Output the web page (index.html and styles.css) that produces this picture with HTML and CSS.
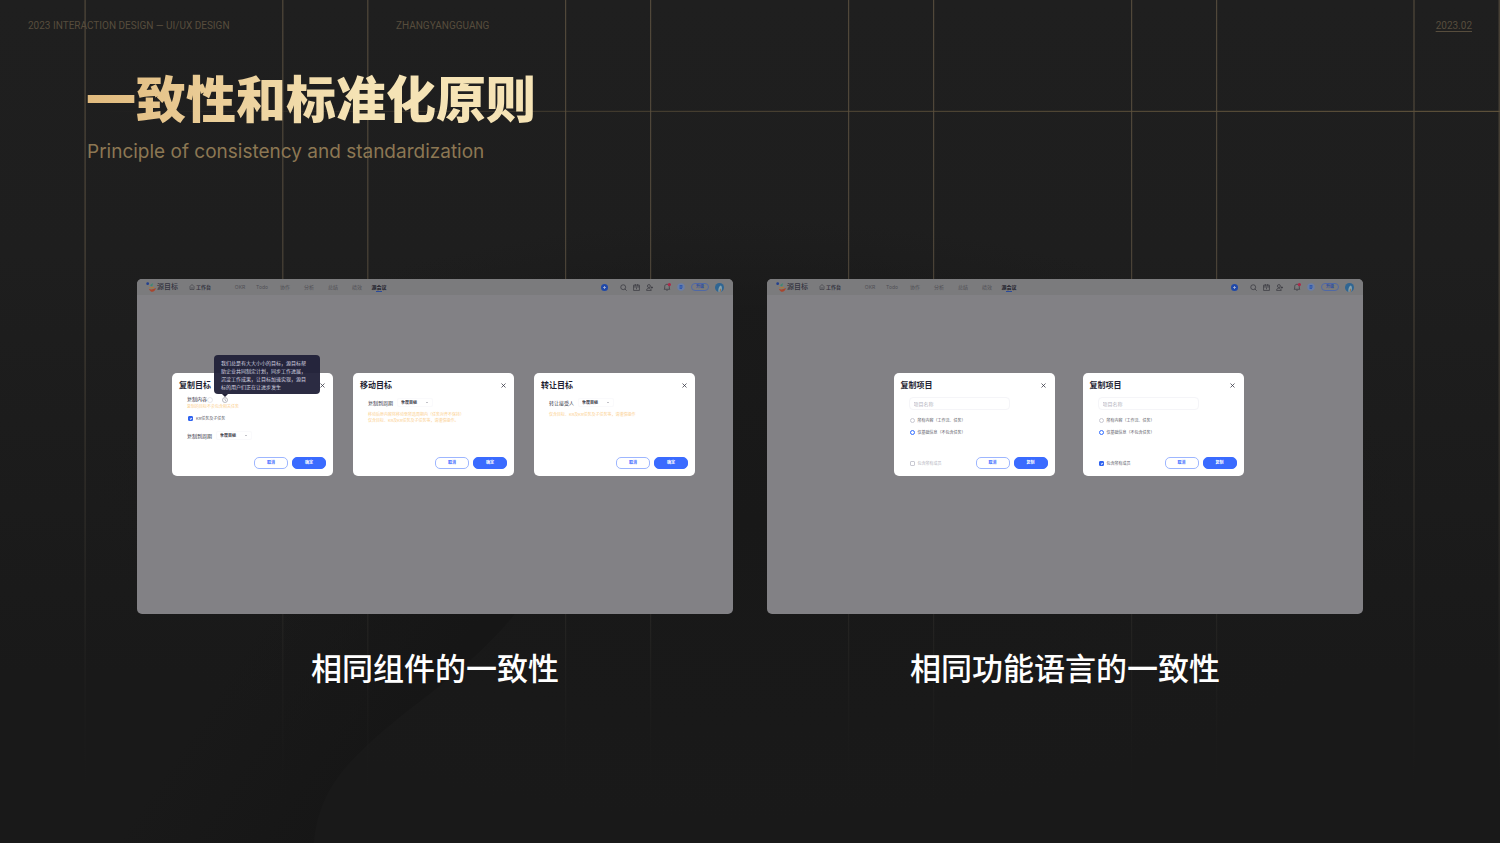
FILE: index.html
```html
<!DOCTYPE html>
<html lang="zh-CN">
<head>
    <meta charset="UTF-8">
    <meta name="viewport" content="width=device-width, initial-scale=1.0">
    <title>一致性和标准化原则</title>
    <link rel="stylesheet" href="styles.css">
</head>
<body>
    <!-- background shapes and grid lines -->
    <svg class="backdrop" viewBox="0 0 1500 843" preserveAspectRatio="none" aria-hidden="true">
        <defs>
            <linearGradient id="fadeDown" gradientUnits="userSpaceOnUse" x1="0" y1="0" x2="0" y2="810">
                <stop offset="0" stop-color="#51483a"/>
                <stop offset="0.3" stop-color="#4c4438"/>
                <stop offset="0.75" stop-color="#262523"/>
                <stop offset="1" stop-color="#1a1a1a" stop-opacity="0"/>
            </linearGradient>
            <linearGradient id="fadeLeft" gradientUnits="userSpaceOnUse" x1="100" y1="0" x2="1500" y2="0">
                <stop offset="0" stop-color="#5c503a" stop-opacity="0"/>
                <stop offset="0.4" stop-color="#5c503a" stop-opacity="0.6"/>
                <stop offset="1" stop-color="#5c503a"/>
            </linearGradient>
            <linearGradient id="curve" gradientUnits="userSpaceOnUse" x1="250" y1="640" x2="400" y2="740">
                <stop offset="0" stop-color="#161616" stop-opacity="0"/>
                <stop offset="1" stop-color="#161616"/>
            </linearGradient>
            <radialGradient id="shade" gradientUnits="userSpaceOnUse" cx="750" cy="520" r="300" gradientTransform="translate(750 0) scale(2.2 1) translate(-750 0)">
                <stop offset="0" stop-color="#181818"/>
                <stop offset="0.7" stop-color="#191919" stop-opacity="0.8"/>
                <stop offset="1" stop-color="#1a1a1a" stop-opacity="0"/>
            </radialGradient>
        </defs>
        <rect width="1500" height="843" fill="url(#shade)"/>
        <path d="M515 614C470 668 425 695 382 732C350 760 318 790 314 843H100V560H550Z" fill="url(#curve)"/>
        <g fill="url(#fadeDown)">
            <rect x="84.5" width="1.2" height="810"/>
            <rect x="282.2" width="1.2" height="810"/>
            <rect x="367.2" width="1.2" height="810"/>
            <rect x="565" width="1.2" height="810"/>
            <rect x="650" width="1.2" height="810"/>
            <rect x="848" width="1.2" height="810"/>
            <rect x="933" width="1.2" height="810"/>
            <rect x="1131" width="1.2" height="810"/>
            <rect x="1216" width="1.2" height="810"/>
            <rect x="1413.4" width="1.2" height="810"/>
            <rect x="1498.6" width="1.2" height="810"/>
        </g>
        <rect x="100" y="110.8" width="1400" height="1.2" fill="url(#fadeLeft)"/>
    </svg>

    <!-- shared icons -->
    <svg class="sprite" aria-hidden="true">
        <symbol id="logo" viewBox="0 0 18 18">
            <circle cx="3" cy="3" r="2.5" fill="#23408f"/>
            <path d="M7 6l6-4-2 6z" fill="#3d8a74"/>
            <path d="M3 6c1 5 5 5 12 2-1 5-10 6-12-2z" fill="#b47a30"/>
            <path d="M5 12c3 2 7 2 13-1-2 8-10 9-13 1z" fill="#a8462f"/>
        </symbol>
        <symbol id="home" viewBox="0 0 12 12"><path d="M2 5l4-4 4 4v6H2zM4 8h4" fill="none" stroke="#2c2c36"/></symbol>
        <symbol id="plus" viewBox="0 0 14 14"><circle cx="7" cy="7" r="7" fill="#1f48a8"/><path d="M7 4v6M4 7h6" stroke="#a9b4d0" stroke-width="1.6"/></symbol>
        <symbol id="search" viewBox="0 0 12 12"><circle cx="5.5" cy="5.5" r="4.2" fill="none" stroke="#35353c" stroke-width="1.2"/><path d="M8.5 8.5l3 3" stroke="#35353c" stroke-width="1.2"/></symbol>
        <symbol id="calendar" viewBox="0 0 12 12"><path d="M1 2h10v9H1zM1 5h10M4 0v3M8 0v3M6 6v3" fill="none" stroke="#35353c" stroke-width="1.2"/></symbol>
        <symbol id="user" viewBox="0 0 12 12"><circle cx="5" cy="3.5" r="2.5" fill="none" stroke="#35353c" stroke-width="1.2"/><path d="M1 11c0-5 7-5 8 0zM8 6h4M10 4v4" fill="none" stroke="#35353c" stroke-width="1.2"/></symbol>
        <symbol id="bell" viewBox="0 0 14 14"><path d="M2 11h10l-1-2V6c0-5-8-5-8 0v3zM6 13h2" fill="none" stroke="#35353c" stroke-width="1.2"/><circle cx="11.2" cy="2.8" r="2.8" fill="#b02848"/></symbol>
        <symbol id="app" viewBox="0 0 16 16"><circle cx="8" cy="8" r="7.5" fill="#6b7ea6"/><path d="M5 5h6M4 8h8M5 11h5M8 4v8" stroke="#2450b0" stroke-width="1.4"/></symbol>
        <symbol id="avatar" viewBox="0 0 18 18"><circle cx="9" cy="9" r="9" fill="#2f6592"/><path d="M7 18c-1-6 1-12 5-13 3 3 2 9 0 12z" fill="#85a2ae"/><path d="M9 17c0-4 1-6 3-6v6z" fill="#96704f"/></symbol>
        <symbol id="close" viewBox="0 0 10 10"><path d="M1 1l8 8M9 1L1 9" stroke="#33333f" stroke-width="1.5"/></symbol>
        <symbol id="info" viewBox="0 0 12 12"><circle cx="6" cy="6" r="5" fill="none" stroke="#777783"/><path d="M6 3v3l2 2" fill="none" stroke="#777783"/></symbol>
        <symbol id="ring" viewBox="0 0 12 12"><circle cx="6" cy="6" r="5" fill="none" stroke="#d0d0d8"/></symbol>
        <symbol id="arrow" viewBox="0 0 6 6"><path d="M2 2l1 1 1-1" fill="none" stroke="#777783"/></symbol>
    </svg>

    <header class="top">
        <span class="top-left">2023 INTERACTION DESIGN — UI/UX DESIGN</span>
        <span class="top-name">ZHANGYANGGUANG</span>
        <span class="top-date">2023.02</span>
    </header>

    <main>
        <h1>一致性和标准化原则</h1>
        <p class="subtitle">Principle of consistency and standardization</p>

        <div class="boards">
            <figure>
                <div class="board">
                    <nav class="bar">
                        <div class="brand"><svg><use href="#logo"/></svg>源目标</div>
                        <a class="desk" href="#"><svg><use href="#home"/></svg>工作台</a>
                        <div class="menu">
                            <a href="#">OKR</a><a href="#">Todo</a><a href="#">协作</a><a href="#">分析</a><a href="#">总结</a><a href="#">绩效</a><a href="#" class="active">源会议</a>
                        </div>
                        <div class="tools">
                            <svg class="add"><use href="#plus"/></svg>
                            <svg><use href="#search"/></svg>
                            <svg><use href="#calendar"/></svg>
                            <svg><use href="#user"/></svg>
                            <svg class="bell"><use href="#bell"/></svg>
                            <svg class="app"><use href="#app"/></svg>
                            <button class="upgrade" type="button">升级</button>
                            <svg class="avatar"><use href="#avatar"/></svg>
                        </div>
                    </nav>
                    <div class="modals">
                        <section class="modal">
                            <div class="modal-head">
                                <h2>复制目标</h2>
                                <button class="close" type="button" aria-label="关闭"><svg><use href="#close"/></svg></button>
                            </div>
                            <div class="modal-body">
                                <div class="label-row">
                                    <span>复制内容</span>
                                    <svg><use href="#ring"/></svg>
                                    <span class="hint">
                                        <svg><use href="#info"/></svg>
                                        <span class="tooltip">我们总是有大大小小的目标，源目标帮<br>助企业共同制定计划，同步工作进展，<br>沉淀工作成果，让目标加速实现，源目<br>标的用户们正在让进步发生</span>
                                    </span>
                                </div>
                                <p class="warn warn-near">复制的目标不会包含相关任务</p>
                                <label class="option option-kr"><input type="checkbox" checked>KR任务及子任务</label>
                                <div class="field field-low">
                                    <label for="period1">复制到周期</label>
                                    <span class="select"><select id="period1"><option>季度目标</option></select><svg><use href="#arrow"/></svg></span>
                                </div>
                            </div>
                            <div class="modal-foot">
                                <button class="btn" type="button">取消</button>
                                <button class="btn primary" type="button">确定</button>
                            </div>
                        </section>

                        <section class="modal">
                            <div class="modal-head">
                                <h2>移动目标</h2>
                                <button class="close" type="button" aria-label="关闭"><svg><use href="#close"/></svg></button>
                            </div>
                            <div class="modal-body">
                                <div class="field">
                                    <label for="period2">复制到周期</label>
                                    <span class="select"><select id="period2"><option>季度目标</option></select><svg><use href="#arrow"/></svg></span>
                                </div>
                                <p class="warn">移动后原内容将移动至所选周期内（任务对齐不保持）<br>仅含目标、KR及KR任务及子任务等，请谨慎操作。</p>
                            </div>
                            <div class="modal-foot">
                                <button class="btn" type="button">取消</button>
                                <button class="btn primary" type="button">确定</button>
                            </div>
                        </section>

                        <section class="modal">
                            <div class="modal-head">
                                <h2>转让目标</h2>
                                <button class="close" type="button" aria-label="关闭"><svg><use href="#close"/></svg></button>
                            </div>
                            <div class="modal-body">
                                <div class="field">
                                    <label for="period3">转让接受人</label>
                                    <span class="select"><select id="period3"><option>季度目标</option></select><svg><use href="#arrow"/></svg></span>
                                </div>
                                <p class="warn">仅含目标、KR及KR任务及子任务等，请谨慎操作</p>
                            </div>
                            <div class="modal-foot">
                                <button class="btn" type="button">取消</button>
                                <button class="btn primary" type="button">确定</button>
                            </div>
                        </section>
                    </div>
                </div>
                <figcaption>相同组件的一致性</figcaption>
            </figure>

            <figure>
                <div class="board">
                    <nav class="bar">
                        <div class="brand"><svg><use href="#logo"/></svg>源目标</div>
                        <a class="desk" href="#"><svg><use href="#home"/></svg>工作台</a>
                        <div class="menu">
                            <a href="#">OKR</a><a href="#">Todo</a><a href="#">协作</a><a href="#">分析</a><a href="#">总结</a><a href="#">绩效</a><a href="#" class="active">源会议</a>
                        </div>
                        <div class="tools">
                            <svg class="add"><use href="#plus"/></svg>
                            <svg><use href="#search"/></svg>
                            <svg><use href="#calendar"/></svg>
                            <svg><use href="#user"/></svg>
                            <svg class="bell"><use href="#bell"/></svg>
                            <svg class="app"><use href="#app"/></svg>
                            <button class="upgrade" type="button">升级</button>
                            <svg class="avatar"><use href="#avatar"/></svg>
                        </div>
                    </nav>
                    <div class="modals modals-pair">
                        <section class="modal">
                            <div class="modal-head">
                                <h2>复制项目</h2>
                                <button class="close" type="button" aria-label="关闭"><svg><use href="#close"/></svg></button>
                            </div>
                            <div class="modal-body">
                                <input class="name" type="text" placeholder="项目名称" aria-label="项目名称">
                                <label class="option option-first"><input type="radio" name="scope1">所有内容（工作流、任务）</label>
                                <label class="option"><input type="radio" name="scope1" checked>仅基础信息（不包含任务）</label>
                            </div>
                            <div class="modal-foot">
                                <label class="member off"><input type="checkbox">包含所有成员</label>
                                <button class="btn" type="button">取消</button>
                                <button class="btn primary" type="button">复制</button>
                            </div>
                        </section>

                        <section class="modal">
                            <div class="modal-head">
                                <h2>复制项目</h2>
                                <button class="close" type="button" aria-label="关闭"><svg><use href="#close"/></svg></button>
                            </div>
                            <div class="modal-body">
                                <input class="name" type="text" placeholder="项目名称" aria-label="项目名称">
                                <label class="option option-first"><input type="radio" name="scope2">所有内容（工作流、任务）</label>
                                <label class="option"><input type="radio" name="scope2" checked>仅基础信息（不包含任务）</label>
                            </div>
                            <div class="modal-foot">
                                <label class="member"><input type="checkbox" checked>包含所有成员</label>
                                <button class="btn" type="button">取消</button>
                                <button class="btn primary" type="button">复制</button>
                            </div>
                        </section>
                    </div>
                </div>
                <figcaption>相同功能语言的一致性</figcaption>
            </figure>
        </div>
    </main>
</body>
</html>
```

FILE: styles.css
```css
* {
    box-sizing: border-box;
}
body {
    position: relative;
    margin: 0;
    min-height: 100vh;
    background: linear-gradient(#1f1f1f 0%, #1e1e1e 30%, #191919 80%);
    color: #fff;
    font-family: Inter, "Noto Sans CJK SC", sans-serif;
}
h1, h2, p, figure {
    margin: 0;
}
svg {
    display: block;
    flex: none;
}
a {
    color: inherit;
    text-decoration: none;
}
button, input, select {
    margin: 0;
    padding: 0;
    border: 0;
    background: none;
    font-family: inherit;
}
.backdrop {
    position: absolute;
    inset: 0;
    width: 100%;
    height: 100%;
}
.sprite {
    position: absolute;
    width: 0;
    height: 0;
}

/* page header */
.top {
    position: relative;
    display: flex;
    padding: 19px 28px 0;
    color: #574d3d;
    font-family: Roboto, sans-serif;
    font-size: 10px;
    line-height: 14px;
}
.top-left {
    width: 368px;
}
.top-date {
    margin-left: auto;
    text-decoration: underline;
    text-underline-offset: 2px;
}
main {
    position: relative;
    padding: 39px 137px 0;
}
h1 {
    width: fit-content;
    margin-left: -51px;
    background: linear-gradient(100deg, #e0b97c, #f5e3b5 60%);
    -webkit-background-clip: text;
    background-clip: text;
    color: transparent;
    font-size: 50px;
    font-weight: 900;
    line-height: 56px;
}
.subtitle {
    margin: 12px 0 0 -50px;
    color: #8c7753;
    font-size: 19px;
    line-height: 24px;
}

/* two boards */
.boards {
    display: grid;
    grid-template-columns: 1fr 1fr;
    gap: 34px;
    margin-top: 115px;
}
.board {
    aspect-ratio: 596 / 335;
    border-radius: 5px;
    background: #828185;
    color: #33333f;
}
figcaption {
    margin-top: 32px;
    font-size: 31px;
    font-weight: 500;
    line-height: 46px;
    text-align: center;
}

/* app bar */
.bar {
    display: flex;
    align-items: center;
    height: 16px;
    padding: 0 9px;
    border-radius: 5px 5px 0 0;
    background: #7b7b7d;
    font-size: 5px;
    line-height: 8px;
}
.brand {
    display: flex;
    align-items: center;
    gap: 1px;
    font-size: 7px;
    font-weight: 500;
}
.brand svg {
    width: 10px;
    height: 10px;
}
.desk {
    display: flex;
    align-items: center;
    gap: 1px;
    margin-left: 11px;
    font-weight: 700;
}
.desk svg {
    width: 6px;
    height: 6px;
}
.menu {
    display: flex;
    margin-left: 18px;
    color: #505055;
    text-align: center;
}
.menu a {
    width: 24px;
}
.menu a:nth-child(-n+2) {
    width: 22px;
}
.menu .active {
    width: 20px;
    color: #22222c;
    font-weight: 700;
}
.active::after {
    content: "";
    display: block;
    width: 6px;
    height: 1px;
    margin: 0 auto -1px;
    background: #2a4b9c;
}
.tools {
    display: flex;
    align-items: center;
    gap: 6px;
    margin-left: auto;
}
.tools svg {
    width: 7px;
    height: 7px;
}
.tools .add {
    margin-right: 6px;
}
.tools .bell {
    width: 8px;
    height: 8px;
    margin-left: 4px;
}
.tools .app {
    width: 8px;
    height: 8px;
}
.tools .avatar {
    width: 9px;
    height: 9px;
}
.upgrade {
    width: 18px;
    height: 8px;
    border: 1px solid #5068a5;
    border-radius: 4px;
    color: #2c4da0;
    font-size: 4px;
    font-weight: 700;
    line-height: 6px;
}

/* modals */
.modals {
    display: flex;
    justify-content: center;
    gap: 20px;
    padding: 78px 3px 0 0;
}
.modals-pair {
    gap: 28px;
    padding: 78px 0 0 7px;
}
.modal {
    display: flex;
    flex-direction: column;
    width: 161px;
    min-height: 103px;
    padding: 7px;
    border-radius: 5px;
    background: #fff;
}
.modal-head {
    display: flex;
    justify-content: space-between;
    height: 10px;
}
.modal-head h2 {
    color: #1f1f33;
    font-size: 8px;
    font-weight: 700;
    line-height: 10px;
}
.close {
    display: flex;
    align-items: center;
    justify-content: center;
    width: 8px;
}
.close svg {
    width: 5px;
    height: 5px;
}
.modal-body {
    padding-left: 8px;
}
.label-row {
    display: flex;
    align-items: center;
    margin-top: 6px;
    font-size: 5px;
    line-height: 7px;
}
.label-row svg {
    width: 6px;
    height: 6px;
}
.hint {
    position: relative;
    margin-left: 9px;
}
.tooltip {
    position: absolute;
    bottom: 9px;
    left: -8px;
    padding: 4px 7px 3px;
    width: 106px;
    border-radius: 4px;
    background: rgba(32, 32, 56, 0.95);
    color: #d5d5e0;
    font-size: 5px;
    line-height: 8px;
    white-space: nowrap;
}
.tooltip::after {
    content: "";
    position: absolute;
    top: 100%;
    left: 8px;
    border: 3px solid transparent;
    border-top-color: #222238;
    border-bottom: 0;
}
.warn {
    margin-top: 5px;
    color: #fbd08f;
    font-size: 4px;
    line-height: 6px;
}
.warn-near {
    margin-top: 1px;
}
.field {
    display: flex;
    align-items: center;
    gap: 4px;
    height: 9px;
    margin-top: 8px;
    font-size: 5px;
}
.field-low {
    margin-top: 9px;
}
.select {
    display: flex;
    align-items: center;
    width: 36px;
    height: 9px;
    padding: 0 3px;
    border: 1px solid #fafafc;
    border-radius: 2px;
}
.select select {
    flex: 1;
    appearance: none;
    color: #33333f;
    font-size: 4px;
    font-weight: 700;
    line-height: 6px;
}
.select svg {
    width: 4px;
    height: 4px;
}
.name {
    display: block;
    width: 101px;
    height: 13px;
    margin-top: 7px;
    padding: 0 4px;
    border: 1px solid #f5f5f8;
    border-radius: 4px;
    font-size: 5px;
}
.name::placeholder {
    color: #b4b4be;
}
.option {
    display: flex;
    align-items: center;
    gap: 3px;
    margin-top: 5px;
    padding-left: 1px;
    color: #5a5a66;
    font-size: 4px;
    line-height: 7px;
}
.option-first {
    margin-top: 7px;
}
input[type="checkbox"], input[type="radio"] {
    position: relative;
    flex: none;
    appearance: none;
    width: 5px;
    height: 5px;
    border: 1px solid #c9c9d2;
    border-radius: 1px;
    background: #fff;
}
input[type="radio"] {
    border-radius: 50%;
}
input[type="radio"]:checked {
    border-color: #2f6bff;
}
input[type="checkbox"]:checked {
    border-color: #2f63f0;
    background: #2f63f0;
}
input[type="checkbox"]:checked::after {
    content: "";
    position: absolute;
    top: 0;
    left: 1px;
    width: 1px;
    height: 2px;
    border: solid #fff;
    border-width: 0 1px 1px 0;
    box-sizing: content-box;
    transform: rotate(45deg) scale(0.7);
}
.modal-foot {
    display: flex;
    align-items: center;
    justify-content: flex-end;
    gap: 4px;
    margin-top: auto;
}
.member {
    display: flex;
    align-items: center;
    gap: 3px;
    margin: 0 auto 0 9px;
    color: #5a5a66;
    font-size: 4px;
}
.off {
    color: #b4b4be;
}
.btn {
    width: 34px;
    height: 12px;
    border: 1px solid #9db6ff;
    border-radius: 5px;
    color: #3a6bff;
    font-size: 4px;
    font-weight: 700;
    line-height: 10px;
}
.primary {
    border-color: #3a6bff;
    background: #3a6bff;
    color: #fff;
}
```
